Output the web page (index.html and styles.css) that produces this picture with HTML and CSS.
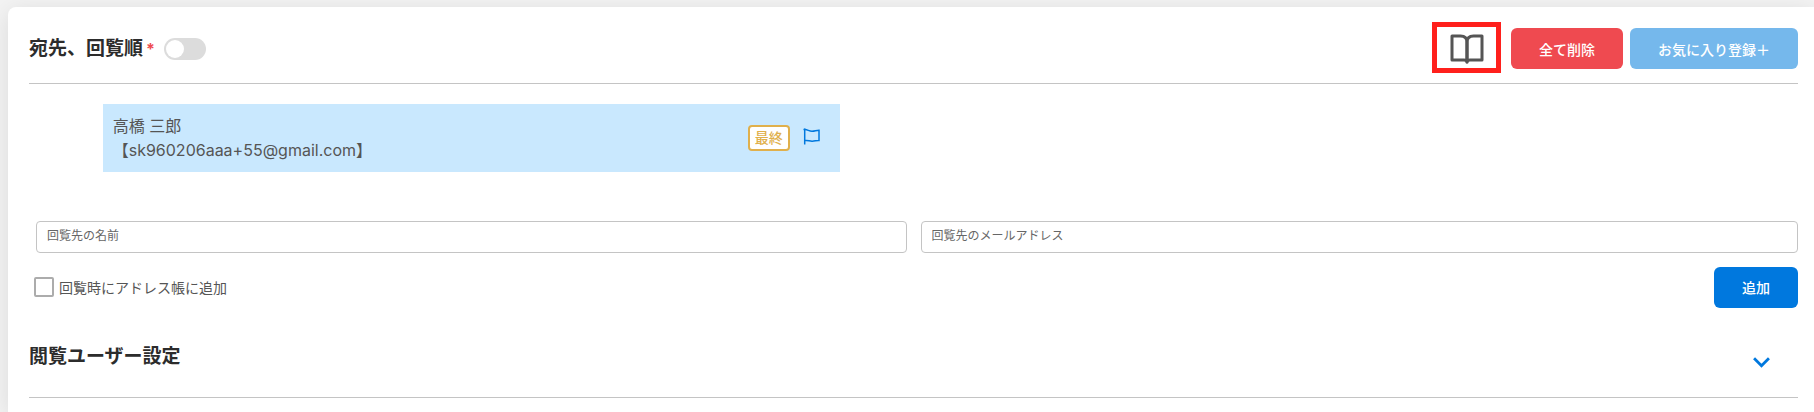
FILE: index.html
```html
<!DOCTYPE html>
<html lang="ja">
<head>
<meta charset="utf-8">
<title>宛先、回覧順</title>
<link rel="stylesheet" href="styles.css">
</head>
<body>
<main class="card">
  <header class="card-header">
    <h2 class="heading">宛先、回覧順</h2>
    <span class="required">*</span>
    <input class="switch" type="checkbox" role="switch" aria-label="回覧順">
    <div class="actions">
      <button class="book-button" type="button" aria-label="アドレス帳">
        <svg class="book-icon" viewBox="0 0 34 30" fill="none" stroke="currentColor" stroke-width="3" stroke-linecap="round" stroke-linejoin="round">
          <path d="M2 2H10.5C14.5 2 17 4 17 8V28C17 26.5 16 26 14 26H2Z"/>
          <path d="M32 2H23.5C19.5 2 17 4 17 8V28C17 26.5 18 26 20 26H32Z"/>
        </svg>
      </button>
      <button class="button danger" type="button">全て削除</button>
      <button class="button light" type="button">お気に入り登録＋</button>
    </div>
  </header>

  <section class="route">
    <div class="recipient">
      <div class="recipient-text">
        <div>高橋 三郎</div>
        <div>【sk960206aaa+55@gmail.com】</div>
      </div>
      <span class="badge">最終</span>
      <svg class="flag-icon" viewBox="0 0 17 17" fill="none" stroke="currentColor" stroke-width="1.5">
        <path d="M1.7 0.5V16.5"/>
        <path d="M0.5 1.5H2C5 1.8 6 3.2 9 3.2C12 3.2 13 2.2 16 2.2V12.4C13 12.2 12 13.3 9 13.2C6 13.1 5 12.2 2 12.6"/>
      </svg>
    </div>
  </section>

  <form class="add-form">
    <div class="fields">
      <div class="field"><input class="text-input" type="text" placeholder="回覧先の名前" aria-label="回覧先の名前"></div>
      <div class="field"><input class="text-input" type="email" placeholder="回覧先のメールアドレス" aria-label="回覧先のメールアドレス"></div>
    </div>
    <div class="form-footer">
      <label class="check-label"><input class="checkbox" type="checkbox">回覧時にアドレス帳に追加</label>
      <button class="button primary" type="button">追加</button>
    </div>
  </form>

  <section class="viewers">
    <h2 class="heading">閲覧ユーザー設定</h2>
    <button class="expand" type="button" aria-label="閲覧ユーザー設定を開く">
      <svg class="chevron" viewBox="0 0 16 10" fill="none" stroke="currentColor" stroke-width="2.6">
        <path d="M1 1L8 8L15 1"/>
      </svg>
    </button>
  </section>
</main>
</body>
</html>
```
FILE: styles.css
```css
* {
  box-sizing: border-box;
}

body {
  margin: 0;
  padding: 7px 0 0 8px;
  background: #f3f3f3;
  color: #555;
  font-family: Inter, "Noto Sans CJK JP", sans-serif;
  font-size: 14px;
  overflow-x: hidden;
}

button,
input {
  margin: 0;
  font: inherit;
}

button {
  cursor: pointer;
}

.card {
  min-height: calc(100vh - 7px);
  padding: 15px 16px 0 21px;
  background: #fff;
  border-radius: 8px 0 0 0;
  box-shadow: 0 4px 25px rgba(0, 0, 0, 0.1);
}

.card-header {
  display: flex;
  align-items: center;
  padding-bottom: 8px;
  border-bottom: 1px solid #c4c4c4;
}

.heading {
  margin: 0;
  color: #2c2c2c;
  font-size: 19px;
  line-height: 28px;
  font-weight: 700;
}

.required {
  width: 10px;
  margin-left: 3px;
  color: #ee4a4f;
  font-size: 16px;
  font-weight: 700;
  line-height: 24px;
}

.switch {
  appearance: none;
  display: flex;
  width: 42px;
  height: 22px;
  margin-left: 8px;
  padding: 2px;
  border-radius: 11px;
  background: #dcdcdc;
}

.switch::before {
  content: "";
  width: 18px;
  height: 18px;
  border-radius: 50%;
  background: #fff;
}

.switch:checked {
  justify-content: flex-end;
  background: #0078de;
}

.actions {
  display: flex;
  align-items: center;
  margin-left: auto;
}

.book-button {
  display: flex;
  align-items: center;
  justify-content: center;
  width: 69px;
  height: 51px;
  margin: 0 10px 2px 0;
  padding: 2px 0 0;
  border: 5px solid #ff201c;
  background: #fff;
  color: #555;
}

.book-icon {
  width: 34px;
  height: 30px;
}

.button {
  height: 41px;
  padding: 0 28px;
  border: 0;
  border-radius: 6px;
  color: #fff;
  font-weight: 500;
}

.danger {
  margin-right: 7px;
  background: #ef4a50;
}

.light {
  background: #75b8ec;
}

.primary {
  padding-bottom: 2px;
  background: #0078de;
}

.route {
  padding: 20px 0 49px;
}

.recipient {
  display: flex;
  align-items: center;
  width: calc(100% * 5 / 12);
  min-height: 68px;
  margin-left: calc(100% / 24);
  padding: 10px 20px 10px 10px;
  background: #c9e8fe;
}

.recipient-text {
  flex: 1;
  font-size: 16px;
  line-height: 24px;
}

.badge {
  padding: 0 5px;
  border: 2px solid #e0b04c;
  border-radius: 4px;
  background: #fff;
  color: #e0b04c;
  font-weight: 500;
  line-height: 22px;
}

.flag-icon {
  width: 17px;
  height: 17px;
  margin-left: 13px;
  margin-bottom: 4px;
  color: #0078de;
}

.fields {
  display: grid;
  grid-template-columns: 1fr 1fr;
}

.field {
  padding-left: 7px;
}

.field:first-child {
  padding-right: 7px;
}

.text-input {
  display: block;
  width: 100%;
  height: 32px;
  padding: 0 10px 4px;
  border: 1px solid #c4c4c4;
  border-radius: 4px;
  color: #555;
  font-size: 12px;
}

.text-input::placeholder {
  color: #666;
}

.form-footer {
  display: flex;
  align-items: center;
  justify-content: space-between;
  padding: 14px 0 0 5px;
}

.check-label {
  display: flex;
  align-items: center;
  gap: 5px;
  padding-bottom: 2px;
}

.checkbox {
  appearance: none;
  width: 20px;
  height: 20px;
  border: 2px solid #acacac;
  border-radius: 2px;
}

.checkbox:checked {
  border-color: #0078de;
  background: #0078de;
}

.viewers {
  display: flex;
  align-items: center;
  justify-content: space-between;
  padding: 35px 28px 26px 0;
  border-bottom: 1px solid #c4c4c4;
}

.expand {
  display: flex;
  padding: 10px 0 0;
  border: 0;
  background: none;
  color: #0078de;
}

.chevron {
  width: 17px;
  height: 11px;
}
```
